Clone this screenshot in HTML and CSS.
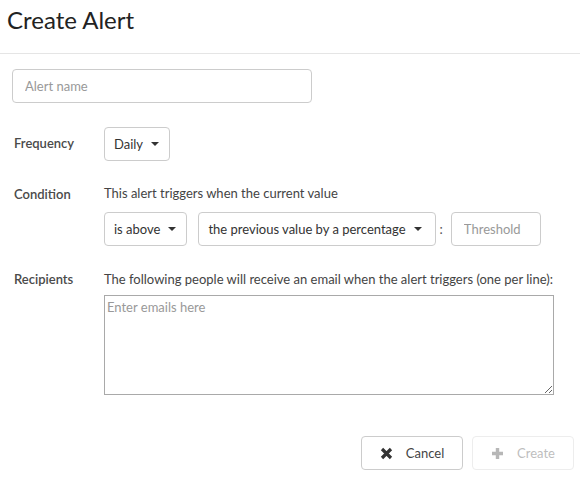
FILE: index.html
```html
<!DOCTYPE html>
<html>
<head>
<meta charset="utf-8">
<link rel="stylesheet" href="styles.css">
</head>
<body>
<div class="header"><h1 class="title">Create Alert</h1></div>
<div class="body">
  <input class="name-input" type="text" placeholder="Alert name">
  <div class="row row-freq">
    <div class="label">Frequency</div>
    <div class="field">
      <div class="select">Daily <span class="caret"></span></div>
    </div>
  </div>
  <div class="row row-cond">
    <div class="label">Condition</div>
    <div class="field">
      <div class="help">This alert triggers when the current value</div>
      <div class="cond-line">
        <div class="select">is above <span class="caret"></span></div>
        <div class="select select-wide">the previous value by a percentage <span class="caret"></span></div>
        <span class="colon">:</span>
        <input class="threshold" type="text" placeholder="Threshold">
      </div>
    </div>
  </div>
  <div class="row row-rec">
    <div class="label">Recipients</div>
    <div class="field">
      <div class="help">The following people will receive an email when the alert triggers (one per line):</div>
      <textarea class="emails" placeholder="Enter emails here"></textarea>
    </div>
  </div>
  <div class="actions">
    <button class="btn">
      <svg class="ico" width="13" height="13" viewBox="0 0 13 13"><path d="M2 2 L11 11 M11 2 L2 11" stroke="#333" stroke-width="3.2" stroke-linecap="butt"/></svg>
      Cancel
    </button>
    <button class="btn btn-disabled" disabled>
      <svg class="ico" width="13" height="13" viewBox="0 0 13 13"><path d="M6.5 1 V12 M1 6.5 H12" stroke="#333" stroke-width="3.4"/></svg>
      Create
    </button>
  </div>
</div>
</body>
</html>
```

FILE: styles.css
```css
* { box-sizing: border-box; }
body {
  margin: 0;
  font-family: Lato, "Open Sans", sans-serif;
  color: #333;
  background: #fff;
}
.header {
  height: 54px;
  border-bottom: 1px solid #e5e5e5;
  padding: 6px 7px 0;
}
.title {
  margin: 0;
  font-size: 24px;
  font-weight: 400;
  line-height: 28px;
  color: #222;
}
.body {
  padding: 15px 6px 0 12px;
}
.name-input {
  display: block;
  width: 300px;
  height: 34px;
  border: 1px solid #ccc;
  border-radius: 4px;
  padding: 0 12px;
  font: inherit;
  font-size: 13px;
  color: #333;
  outline: none;
}
::placeholder { color: #999; opacity: 1; }
.row {
  display: flex;
  padding-left: 2px;
}
.label {
  width: 90px;
  flex: none;
  font-size: 13px;
  font-weight: 600;
  color: #4a4a4a;
}
.row-freq { margin-top: 24px; align-items: center; }
.row-freq .label { padding-bottom: 2px; }
.row-cond { margin-top: 25px; }
.row-cond .help { margin-top: -1px; }
.row-rec { margin-top: 25px; }
.help {
  font-size: 13px;
  line-height: 16px;
  color: #444;
}
.select {
  display: inline-flex;
  align-items: center;
  height: 34px;
  padding: 0 10px 0 9px;
  border: 1px solid #ccc;
  border-radius: 4px;
  font-size: 13px;
  color: #333;
  background: #fff;
  white-space: nowrap;
}
.select-wide { padding-right: 13px; }
.caret {
  display: inline-block;
  margin-left: 8px;
  width: 0; height: 0;
  border-left: 4px solid transparent;
  border-right: 4px solid transparent;
  border-top: 4px solid #333;
}
.cond-line {
  display: flex;
  align-items: center;
  gap: 11px;
  margin-top: 11px;
}
.colon { font-size: 13px; color: #555; margin: 0 -3px 0 -7px; }
.threshold {
  width: 90px;
  height: 34px;
  border: 1px solid #ccc;
  border-radius: 4px;
  padding: 0 12px;
  font: inherit;
  font-size: 13px;
  outline: none;
}
.emails {
  display: block;
  margin-top: 8px;
  width: 450px;
  height: 100px;
  border: 1px solid #a9a9a9;
  padding: 3px 2px;
  font: inherit;
  font-size: 13px;
  resize: both;
}
.actions {
  display: flex;
  justify-content: flex-end;
  gap: 9px;
  margin-top: 41px;
}
.btn {
  display: inline-flex;
  align-items: center;
  justify-content: center;
  gap: 13px;
  width: 102px;
  height: 34px;
  border: 1px solid #ccc;
  border-radius: 4px;
  background: #fff;
  font: inherit;
  font-size: 13px;
  color: #444;
  padding: 0;
}
.btn-disabled { opacity: 0.35; }
.ico { display: block; }
```
